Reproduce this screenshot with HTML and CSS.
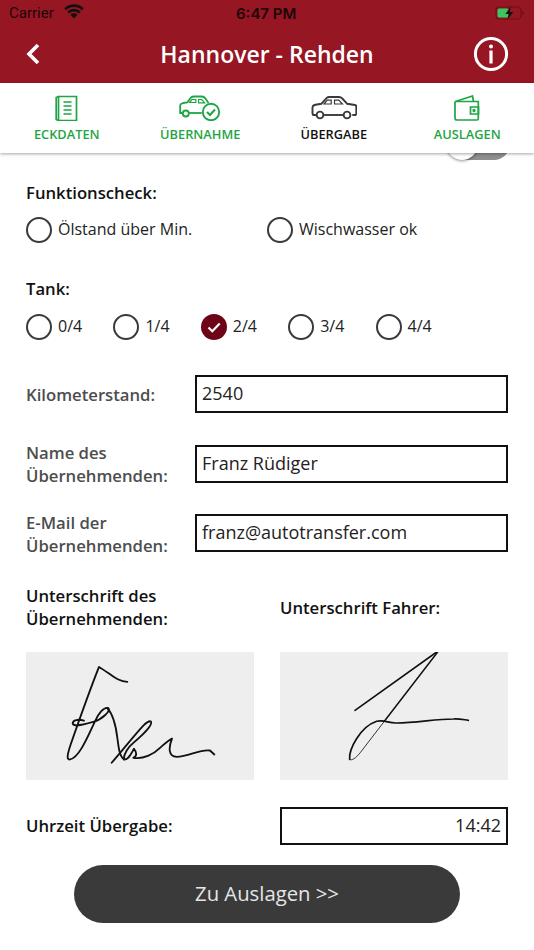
FILE: index.html
```html
<!DOCTYPE html>
<html lang="de">
<head>
<meta charset="utf-8">
<title>Hannover - Rehden</title>
<link rel="stylesheet" href="styles.css">
</head>
<body>
<div class="screen">
  <header class="topbar">
    <div class="status">
      <div class="status-left">
        <span class="carrier">Carrier</span>
        <svg class="wifi" viewBox="0 0 20 15"><path d="M10 14.500 6.400 10.700a5.200 5.200 0 0 1 7.200 0Z" fill="#111"/><path d="M4.100 8.500a8.600 8.600 0 0 1 11.800 0M1.200 5.200a12.800 12.800 0 0 1 17.600 0" fill="none" stroke="#111" stroke-width="2.700"/></svg>
      </div>
      <span class="clock">6:47 PM</span>
      <svg class="battery" viewBox="0 0 30 14"><rect x="1" y="1" width="25" height="12" rx="3.400" fill="none" stroke="#6d1019" stroke-width="1.200"/><rect x="2.500" y="2.500" width="11" height="9" rx="1.600" fill="#3cc45f"/><path d="M27.500 5v4c1-.3 1.600-1 1.600-2s-.6-1.700-1.600-2Z" fill="#6d1019"/><path d="M15.800 .6 10.300 8h3.500l-1.300 5.600L18.200 6h-3.500Z" fill="#111"/></svg>
    </div>
    <div class="navrow">
      <svg class="back" viewBox="0 0 16 24"><path d="M13 3 4 12l9 9" fill="none" stroke="#fff" stroke-width="3.600"/></svg>
      <h1 class="title">Hannover - Rehden</h1>
      <svg class="info" viewBox="0 0 36 36"><circle cx="18" cy="18" r="15.600" fill="none" stroke="#fff" stroke-width="3"/><rect x="16.400" y="14.500" width="3.200" height="13" fill="#fff"/><circle cx="18" cy="10.500" r="2" fill="#fff"/></svg>
    </div>
  </header>

  <nav class="tabs">
    <div class="tab done">
      <svg class="ico" width="24" height="26" viewBox="0 0 24 26"><g fill="none" stroke="#1fa544" stroke-width="1.700"><path d="M3.500 1.500h18v24h-18z"/><path d="M3.500 1.500 1.200 2.500v22l2.300 1"/><path d="M8.500 7h8M8.500 11h8M8.500 15h8M8.500 19h8" stroke-width="1.500"/></g></svg>
      <span>ECKDATEN</span>
    </div>
    <div class="tab done">
      <svg class="ico" width="42" height="26" viewBox="0 0 42 26"><g fill="none" stroke="#1fa544" stroke-width="1.800"><path d="M3.500 18H1.200v-7.500c0-1.500 1.200-2 3-2.500l4-.5L12 2.500c1-.8 2-1 3-1h8c1.500 0 2.500.8 3.500 2L29.500 8"/><path d="M9.800 18h13"/><path d="M10.500 7.500 13 4.500h3.800v3zM19.500 4.500h3.200l3 3.300h-6.200z" stroke-width="1.200"/><circle cx="6.800" cy="18.500" r="3"/><circle cx="32" cy="17" r="8.200" stroke-width="1.900"/><path d="m28 17 3 3 5-5.500" stroke-width="2.100"/></g></svg>
      <span>ÜBERNAHME</span>
    </div>
    <div class="tab current">
      <svg class="ico" width="46" height="26" viewBox="0 0 46 26"><g fill="none" stroke="#3a3a3a" stroke-width="1.900"><path d="M5.500 20H2.200l-.7-1.500v-6c0-1.700 1-2.400 3-2.800l5.800-.9 5.200-5.600c.8-.8 1.700-1.200 2.800-1.200h9.800c1.300 0 2.300.6 3.200 1.500l4.900 5.300 7.800 1.200c1 .2 1.300.7 1.300 1.700v7.300l-.8 1h-3.200"/><path d="M12.700 20h19.600"/><circle cx="9" cy="20" r="3.400"/><circle cx="36" cy="20" r="3.400"/><path d="M13 9l3.200-3.800h4V9zM23.500 5.200h4.300l3.600 3.800h-7.900z" stroke-width="1.200"/></g></svg>
      <span>ÜBERGABE</span>
    </div>
    <div class="tab done">
      <svg class="ico" width="26" height="26" viewBox="0 0 26 26"><g fill="none" stroke="#1fa544" stroke-width="1.700"><path d="M1 7.300V23c0 1.200.8 2 2 2h20c.8 0 1.300-.5 1.300-1.300V6.500H1.800C1.300 6.500 1 6.800 1 7.300Z"/><path d="M1.500 6.500 18.500 1l1 5.500"/><path d="M16.500 12h8v7h-8z"/><circle cx="20" cy="15.500" r=".8" fill="#1fa544"/></g></svg>
      <span>AUSLAGEN</span>
    </div>
  </nav>

  <main class="content">
    <div class="toggle"></div>

    <h2 class="label first">Funktionscheck:</h2>
    <div class="checks">
      <div class="check wide"><i class="radio"></i><span>Ölstand über Min.</span></div>
      <div class="check"><i class="radio"></i><span>Wischwasser ok</span></div>
    </div>

    <h2 class="label tank">Tank:</h2>
    <div class="checks low">
      <div class="check fuel"><i class="radio"></i><span>0/4</span></div>
      <div class="check fuel"><i class="radio"></i><span>1/4</span></div>
      <div class="check fuel"><i class="radio on"><svg viewBox="0 0 26 26"><path d="m7.500 13.500 3.800 3.700 7.400-7.700" fill="none" stroke="#fff" stroke-width="2.200"/></svg></i><span>2/4</span></div>
      <div class="check fuel"><i class="radio"></i><span>3/4</span></div>
      <div class="check fuel"><i class="radio"></i><span>4/4</span></div>
    </div>

    <div class="field km"><label>Kilometerstand:</label><div class="input">2540</div></div>
    <div class="field name"><label>Name des<br>Übernehmenden:</label><div class="input">Franz Rüdiger</div></div>
    <div class="field mail"><label>E-Mail der<br>Übernehmenden:</label><div class="input">franz@autotransfer.com</div></div>

    <div class="sign-grid">
      <div class="sign-label">Unterschrift des<br>Übernehmenden:</div>
      <div class="sign-label">Unterschrift Fahrer:</div>
      <svg class="sig" viewBox="78 36 684 386" preserveAspectRatio="none"><g fill="none" stroke="#111" stroke-width="5.500" stroke-linecap="round" stroke-linejoin="round"><path d="M382 126C352 126 330 100 297 81C270 150 238 240 212 315C203 342 198 362 210 360C236 356 262 295 285 245C295 222 312 200 325 205C333 214 305 240 280 247C255 254 222 263 218 252C218 240 235 238 252 243"/><path d="M322 205C340 225 348 260 352 295C356 325 358 350 372 360"/><path d="M335 370C362 340 400 290 430 258C440 248 450 243 453 246C458 256 430 285 400 310C385 322 370 345 372 360C385 362 392 345 402 328C410 338 412 350 400 355C430 360 460 345 480 325C495 312 505 302 516 297C505 325 505 352 530 352C565 352 600 328 630 333L643 345"/></g></svg>
      <svg class="sig" viewBox="30 36 684 386" preserveAspectRatio="none"><g fill="none" stroke="#111" stroke-linecap="round" stroke-linejoin="round"><path d="M255 212 500 36" stroke-width="5"/><path d="M503 36 343 245" stroke-width="4.500"/><path d="M343 245 272 338C258 356 245 365 239 360" stroke-width="2.500"/><path d="M239 360C236 330 270 262 320 245C345 240 355 251 380 250C440 250 495 238 550 238C570 237 580 240 595 242" stroke-width="5"/></g></svg>
    </div>

    <div class="time-row">
      <div class="sign-label">Uhrzeit Übergabe:</div>
      <div class="input right">14:42</div>
    </div>

    <button class="cta">Zu Auslagen &gt;&gt;</button>
  </main>
</div>
</body>
</html>
```

FILE: styles.css
```css
* { box-sizing: border-box; }
html, body { margin: 0; padding: 0; background: #fff; }
body { font-family: "Open Sans", sans-serif; color: #111; }
.screen { width: 534px; height: 950px; overflow: hidden; position: relative; background: #fff; }

.topbar { height: 83px; background: #961623; }
.status { height: 26px; display: flex; align-items: center; justify-content: space-between; padding: 0 9px; position: relative; }
.status-left { display: flex; align-items: center; gap: 10px; }
.carrier { font-family: Roboto, sans-serif; font-size: 15px; color: #1c0608; }
.wifi { width: 20px; height: 15px; margin-top: -3px; }
.clock { position: absolute; left: 236px; top: 4px; font-family: Inter, sans-serif; font-weight: 600; font-size: 15px; color: #1c0608; }
.battery { width: 30px; height: 14px; margin-right: 0; }

.navrow { height: 55px; display: grid; grid-template-columns: 1fr auto 1fr; align-items: center; padding: 0 25px 0 25px; }
.back { width: 16px; height: 24px; }
.title { margin: 0; font-size: 23px; font-weight: 600; color: #fff; }
.info { width: 36px; height: 36px; justify-self: end; }

.tabs { height: 70px; display: grid; grid-template-columns: repeat(4, 1fr); background: #fff; box-shadow: 0 1px 3px rgba(0,0,0,.35); position: relative; z-index: 2; }
.tab { display: flex; flex-direction: column; align-items: center; padding-top: 12px; font-size: 12.800px; font-weight: 600; }
.tab span { margin-top: 4px; line-height: 18px; }
.tab.done { color: #1fa544; }
.tab.current { color: #111; }
.ico { display: block; }

.content { padding: 0 26px; position: relative; }
.toggle { position: absolute; left: 446px; top: -25px; width: 64px; height: 32px; border-radius: 16px; background: #8f8f8f; }
.toggle::before { content: ""; position: absolute; left: 0; top: 0; width: 32px; height: 32px; border-radius: 50%; background: #fff; box-shadow: 0 1px 3px rgba(0,0,0,.4); }

.label { margin: 0; font-size: 16.700px; font-weight: 600; line-height: 22px; color: #111; }
.label.first { padding-top: 29px; height: 51px; }
.label.tank { margin-top: 35px; }
.checks { display: flex; margin-top: 13px; }
.checks.low { margin-top: 14px; }
.check { display: flex; align-items: center; gap: 6px; font-size: 16px; color: #222; height: 26px; }
.check span { padding-bottom: 3px; }
.check.wide { width: 241px; }
.check.fuel { width: 87.400px; }
.radio { width: 26px; height: 26px; border-radius: 50%; border: 2px solid #3a3a3a; display: block; flex: none; }
.radio.on { background: #6d0418; border: 0; }
.radio.on svg { display: block; width: 26px; height: 26px; }

.field { display: grid; grid-template-columns: 169px 313px; align-items: center; }
.field label { font-size: 16.700px; font-weight: 600; line-height: 23px; color: #4d4d4d; }
.field.km { margin-top: 35px; }
.field.name { margin-top: 28px; }
.field.mail { margin-top: 23px; }
.field.mail label { margin: 1px 0 -1px; }
.input { height: 38px; border: 2px solid #111; padding: 0 5px; font-size: 18px; line-height: 32px; color: #222; }
.input.right { text-align: right; }

.sign-grid { display: grid; grid-template-columns: 228px 228px; column-gap: 26px; margin-top: 28px; align-items: center; }
.sign-label { font-size: 16.700px; font-weight: 600; line-height: 23px; color: #111; }
.sign-grid .sign-label { padding-bottom: 1px; }
.time-row .sign-label { padding-bottom: 2px; }
.sig { display: block; width: 228px; height: 128px; background: #eee; margin-top: 21px; }

.time-row { display: grid; grid-template-columns: 228px 228px; column-gap: 26px; align-items: center; margin-top: 27px; }

.cta { display: block; width: 386px; height: 58px; margin: 20px 0 0 48px; padding: 0 0 2px; border: 0; border-radius: 29px; background: #3a3a3a; color: #e6e6e6; font-family: "Open Sans", sans-serif; font-size: 20.300px; }
```
